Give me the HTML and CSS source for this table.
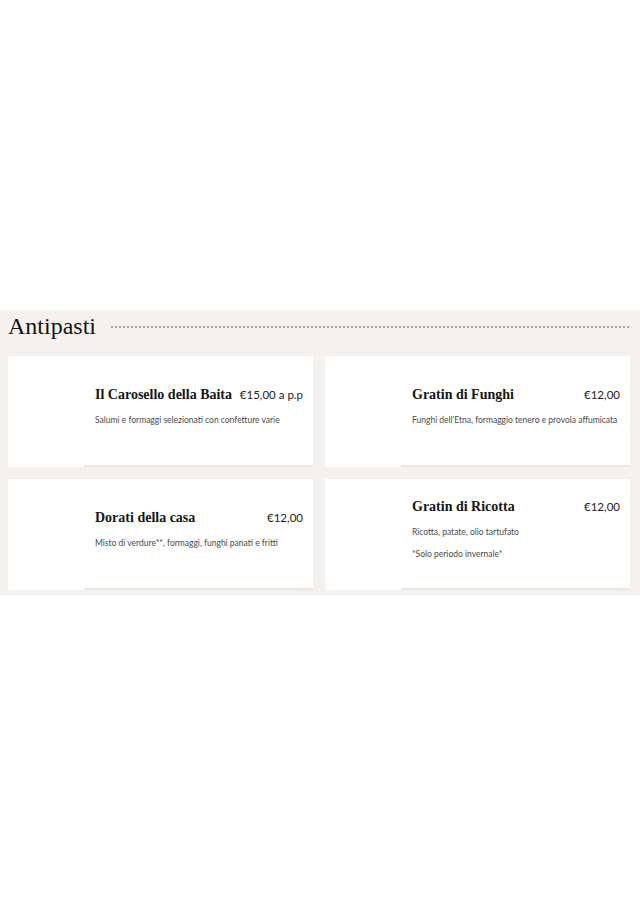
FILE: index.html
```html
<!DOCTYPE html>
<html lang="it">
<head>
<meta charset="utf-8">
<title>Antipasti</title>
<link rel="stylesheet" href="styles.css">
</head>
<body>
<main class="page">
  <section class="menu-section">
    <header class="section-head">
      <h2 class="section-title">Antipasti</h2>
      <span class="dots"></span>
    </header>
    <div class="grid">
      <article class="card">
        <div class="thumb"></div>
        <div class="content">
          <div class="row">
            <h3 class="name">Il Carosello della Baita</h3>
            <span class="price">€15,00 a p.p</span>
          </div>
          <p class="desc">Salumi e formaggi selezionati con confetture varie</p>
        </div>
      </article>
      <article class="card">
        <div class="thumb"></div>
        <div class="content">
          <div class="row">
            <h3 class="name">Gratin di Funghi</h3>
            <span class="price">€12,00</span>
          </div>
          <p class="desc">Funghi dell'Etna, formaggio tenero e provola affumicata</p>
        </div>
      </article>
      <article class="card">
        <div class="thumb"></div>
        <div class="content">
          <div class="row">
            <h3 class="name">Dorati della casa</h3>
            <span class="price">€12,00</span>
          </div>
          <p class="desc">Misto di verdure**, formaggi, funghi panati e fritti</p>
        </div>
      </article>
      <article class="card">
        <div class="thumb"></div>
        <div class="content">
          <div class="row">
            <h3 class="name">Gratin di Ricotta</h3>
            <span class="price">€12,00</span>
          </div>
          <p class="desc">Ricotta, patate, olio tartufato</p>
          <p class="desc">*Solo periodo invernale*</p>
        </div>
      </article>
    </div>
  </section>
</main>
</body>
</html>
```
FILE: styles.css
```css
html, body {
  margin: 0;
  padding: 0;
  background: #ffffff;
}

.page {
  padding-top: 310px;
}

.menu-section {
  background: #f4f1ee;
  padding: 2px 10px 5px 8px;
}

.section-head {
  display: flex;
  align-items: center;
  gap: 15px;
  height: 29px;
  margin-bottom: 15px;
}

.section-title {
  margin: 0;
  font-family: "Liberation Serif", serif;
  font-weight: 400;
  font-size: 24px;
  line-height: 29px;
  color: #141414;
}

.dots {
  flex: 1;
  height: 2px;
  background: repeating-linear-gradient(to right, #a8a4a0 0 2px, transparent 2px 4px);
}

.grid {
  display: grid;
  grid-template-columns: 1fr 1fr;
  grid-auto-rows: 111px;
  gap: 12px;
}

.card {
  display: flex;
  background: #ffffff;
}

.thumb {
  width: 76px;
  flex: none;
}

.content {
  flex: 1;
  display: flex;
  flex-direction: column;
  justify-content: center;
  padding: 0 10px 0 11px;
  border-bottom: 2px solid #ebe6df;
}

.row {
  display: flex;
  justify-content: space-between;
  align-items: center;
  gap: 6px;
  height: 20px;
  margin-bottom: 9px;
}

.name {
  margin: 0;
  font-family: "Liberation Serif", serif;
  font-weight: 700;
  font-size: 14px;
  line-height: 20px;
  color: #151515;
  white-space: nowrap;
}

.price {
  font-family: Lato, "Liberation Sans", sans-serif;
  font-size: 11.5px;
  line-height: 20px;
  color: #1c1c1c;
  white-space: nowrap;
}

.desc {
  margin: 0 0 9px;
  font-family: Lato, "Liberation Sans", sans-serif;
  font-size: 8.5px;
  line-height: 13px;
  color: #4a4a4a;
}
```
